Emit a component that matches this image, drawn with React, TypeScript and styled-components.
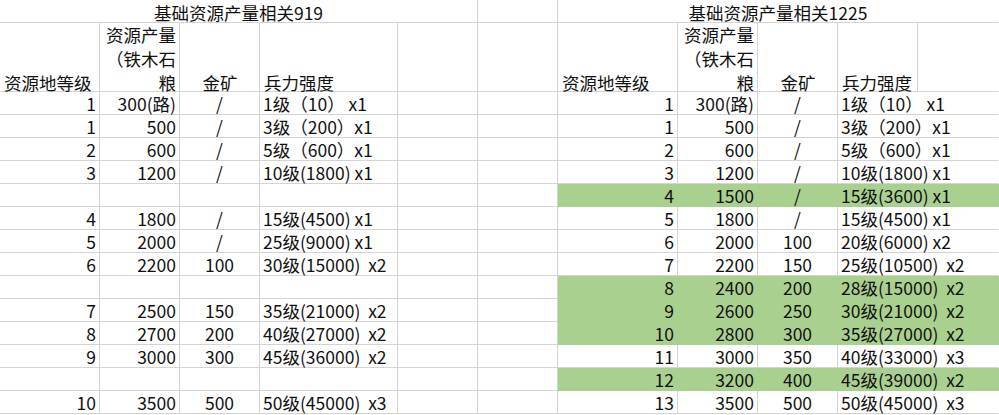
import React from "react";
import styled, { createGlobalStyle } from "styled-components";

const GRID = "#d4d4d4";
const GREEN = "#a9d08e";

const GlobalStyle = createGlobalStyle`
  html, body {
    margin: 0;
    padding: 0;
    background: #ffffff;
  }
  body {
    font-family: "Noto Sans CJK SC", "Noto Sans", sans-serif;
    color: #111111;
  }
`;

const Sheet = styled.div`
  display: grid;
  grid-template-columns: 100px 80px 80px 138px 80px 80px 120px 80px 80px 80px 81px;
  grid-template-rows: 23px 69px repeat(14, 23px);
  width: 999px;
  font-size: 17.5px;
  line-height: 23px;
`;

type Align = "left" | "right" | "center";

const Cell = styled.div<{ $align?: Align; $fill?: string; $span?: number; $noRight?: boolean }>`
  box-sizing: border-box;
  grid-column: span ${(p) => p.$span ?? 1};
  border-right: 1px solid ${(p) => (p.$noRight ? "transparent" : p.$fill ?? GRID)};
  border-bottom: 1px solid ${(p) => p.$fill ?? GRID};
  background: ${(p) => p.$fill ?? "transparent"};
  text-align: ${(p) => p.$align ?? "left"};
  padding: 0 3px;
  white-space: pre;
  overflow: visible;
`;

const TitleCell = styled(Cell)`
  text-align: center;
  padding-top: 1px;
`;

const HeaderCell = styled(Cell)<{ $lines: number }>`
  line-height: 24px;
  padding-top: ${(p) => (3 - p.$lines) * 24}px;
  padding-left: 4px;
  white-space: normal;
`;

type Row = { cells: string[] | null; green?: boolean };

const left: Row[] = [
  { cells: ["1", "300(路)", "/", "1级（10） x1"] },
  { cells: ["1", "500", "/", "3级（200）x1"] },
  { cells: ["2", "600", "/", "5级（600）x1"] },
  { cells: ["3", "1200", "/", "10级(1800) x1"] },
  { cells: null },
  { cells: ["4", "1800", "/", "15级(4500) x1"] },
  { cells: ["5", "2000", "/", "25级(9000) x1"] },
  { cells: ["6", "2200", "100", "30级(15000)  x2"] },
  { cells: null },
  { cells: ["7", "2500", "150", "35级(21000)  x2"] },
  { cells: ["8", "2700", "200", "40级(27000)  x2"] },
  { cells: ["9", "3000", "300", "45级(36000)  x2"] },
  { cells: null },
  { cells: ["10", "3500", "500", "50级(45000)  x3"] },
];

const right: Row[] = [
  { cells: ["1", "300(路)", "/", "1级（10） x1"] },
  { cells: ["1", "500", "/", "3级（200）x1"] },
  { cells: ["2", "600", "/", "5级（600）x1"] },
  { cells: ["3", "1200", "/", "10级(1800) x1"] },
  { cells: ["4", "1500", "/", "15级(3600) x1"], green: true },
  { cells: ["5", "1800", "/", "15级(4500) x1"] },
  { cells: ["6", "2000", "100", "20级(6000) x2"] },
  { cells: ["7", "2200", "150", "25级(10500)  x2"] },
  { cells: ["8", "2400", "200", "28级(15000)  x2"], green: true },
  { cells: ["9", "2600", "250", "30级(21000)  x2"], green: true },
  { cells: ["10", "2800", "300", "35级(27000)  x2"], green: true },
  { cells: ["11", "3000", "350", "40级(33000)  x3"] },
  { cells: ["12", "3200", "400", "45级(39000)  x2"], green: true },
  { cells: ["13", "3500", "500", "50级(45000)  x3"] },
];

const aligns: Align[] = ["right", "right", "center", "left"];

export default function App() {
  return (
    <>
      <GlobalStyle />
      <Sheet>
        <TitleCell $span={5}>基础资源产量相关919</TitleCell>
        <Cell />
        <TitleCell $span={5} $noRight>
          基础资源产量相关1225
        </TitleCell>

        <HeaderCell $lines={1}>资源地等级</HeaderCell>
        <HeaderCell $lines={3} $align="right">
          资源产量（铁木石粮
        </HeaderCell>
        <HeaderCell $lines={1} $align="center">
          金矿
        </HeaderCell>
        <HeaderCell $lines={1}>兵力强度</HeaderCell>
        <Cell />
        <Cell />
        <HeaderCell $lines={1}>资源地等级</HeaderCell>
        <HeaderCell $lines={3} $align="right">
          资源产量（铁木石粮
        </HeaderCell>
        <HeaderCell $lines={1} $align="center">
          金矿
        </HeaderCell>
        <HeaderCell $lines={1}>兵力强度</HeaderCell>
        <Cell $noRight />

        {left.map((l, i) => {
          const r = right[i];
          const fill = r.green ? GREEN : undefined;
          return (
            <React.Fragment key={i}>
              {aligns.map((a, j) => (
                <Cell key={`l${j}`} $align={a}>
                  {l.cells ? l.cells[j] : ""}
                </Cell>
              ))}
              <Cell />
              <Cell />
              {aligns.map((a, j) => (
                <Cell
                  key={`r${j}`}
                  $align={a}
                  $fill={fill}
                  $span={j === 3 ? 2 : 1}
                  $noRight={j === 3}
                >
                  {r.cells ? r.cells[j] : ""}
                </Cell>
              ))}
            </React.Fragment>
          );
        })}
      </Sheet>
    </>
  );
}
